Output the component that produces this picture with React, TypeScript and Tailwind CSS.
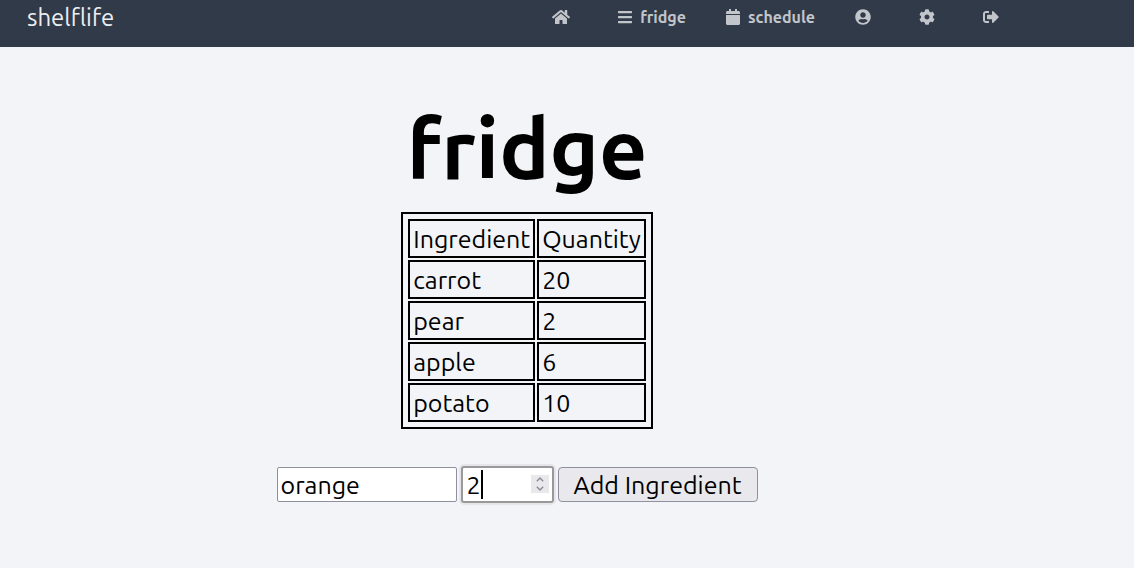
import { useState } from "react";
import type { ReactNode } from "react";
import {
  FaBars,
  FaCalendar,
  FaCog,
  FaHome,
  FaSignOutAlt,
  FaUserCircle,
} from "react-icons/fa";

type Row = { name: string; quantity: number };

const initialRows: Row[] = [
  { name: "carrot", quantity: 20 },
  { name: "pear", quantity: 2 },
  { name: "apple", quantity: 6 },
  { name: "potato", quantity: 10 },
];

function NavLink({
  href,
  label,
  icon,
  children,
}: {
  href: string;
  label: string;
  icon: ReactNode;
  children?: ReactNode;
}) {
  return (
    <a
      href={href}
      aria-label={label}
      className="flex items-center text-base leading-6 font-bold text-[#c2c5ca]"
    >
      <span className="mr-2">{icon}</span>
      {children}
    </a>
  );
}

export default function App() {
  const [rows, setRows] = useState(initialRows);
  const [name, setName] = useState("orange");
  const [quantity, setQuantity] = useState("2");

  const step = (by: number) => setQuantity(String(Number(quantity) + by));

  return (
    <div className="min-h-screen bg-[#f2f4f8] font-[Ubuntu,'Noto_Sans',sans-serif] text-black">
      <header className="flex items-start justify-between bg-[#313a48] pr-[127px] pb-3 pl-[27px]">
        <a href="#home" className="text-2xl leading-[35px] text-[#eceef1]">
          shelflife
        </a>
        <nav className="flex gap-10 pt-[5px]">
          <NavLink href="#home" label="home" icon={<FaHome className="h-4 w-[18px]" />} />
          <NavLink href="#fridge" label="fridge" icon={<FaBars className="h-4 w-[14px]" />}>
            fridge
          </NavLink>
          <NavLink href="#schedule" label="schedule" icon={<FaCalendar className="h-4 w-[14px]" />}>
            schedule
          </NavLink>
          <NavLink href="#account" label="account" icon={<FaUserCircle className="h-4 w-4" />} />
          <NavLink href="#settings" label="settings" icon={<FaCog className="h-4 w-4" />} />
          <NavLink href="#logout" label="log out" icon={<FaSignOutAlt className="h-4 w-4" />} />
        </nav>
      </header>

      <main className="flex flex-col items-center pt-[51px] pr-20 text-[25px]">
        <h1 className="text-[84px] leading-[100px] font-bold">fridge</h1>

        <table className="mt-[14px] border-separate border-spacing-[2px] border-2 border-black p-[3px]">
          <thead>
            <tr>
              <th className="h-[39px] border-2 border-black px-[3px] text-left leading-8 font-normal">
                Ingredient
              </th>
              <th className="h-[39px] border-2 border-black px-[3px] text-left leading-8 font-normal">
                Quantity
              </th>
            </tr>
          </thead>
          <tbody>
            {rows.map((row) => (
              <tr key={row.name}>
                <td className="h-[39px] border-2 border-black px-[3px] leading-8">{row.name}</td>
                <td className="h-[39px] border-2 border-black px-[3px] leading-8">
                  {row.quantity}
                </td>
              </tr>
            ))}
          </tbody>
        </table>

        <form
          className="mt-[37px] flex items-center gap-1 pr-5"
          onSubmit={(event) => {
            event.preventDefault();
            setRows([...rows, { name, quantity: Number(quantity) }]);
          }}
        >
          <input
            aria-label="Ingredient"
            value={name}
            onChange={(event) => setName(event.target.value)}
            className="h-[35px] w-[180px] rounded-xs border border-[#8f8f9d] bg-white px-[3px] pt-[2px]"
          />
          <div className="relative">
            <input
              type="number"
              aria-label="Quantity"
              value={quantity}
              onChange={(event) => setQuantity(event.target.value)}
              className="block h-[37px] w-[93px] [appearance:textfield] rounded-[3px] border-2 border-[#999999] bg-white px-1 pt-[2px] caret-transparent ring-2 ring-[#e6e6ea] outline-none"
            />
            <span className="absolute top-1 left-5 h-[29px] w-[2px] bg-black" />
            <div className="absolute top-[9px] right-[5px] flex h-[18px] w-[18px] flex-col bg-[#e9e9ed] text-[#8a8a90]">
              <button
                type="button"
                aria-label="Increase quantity"
                onClick={() => step(1)}
                className="flex h-[9px] items-center justify-center"
              >
                <svg width="8" height="5" viewBox="0 0 8 5" fill="none" stroke="currentColor" strokeWidth="1.4">
                  <path d="M0.8 4.2 4 1 7.2 4.2" />
                </svg>
              </button>
              <button
                type="button"
                aria-label="Decrease quantity"
                onClick={() => step(-1)}
                className="flex h-[9px] items-center justify-center"
              >
                <svg width="8" height="5" viewBox="0 0 8 5" fill="none" stroke="currentColor" strokeWidth="1.4">
                  <path d="M0.8 0.8 4 4 7.2 0.8" />
                </svg>
              </button>
            </div>
          </div>
          <button
            type="submit"
            className="h-[35px] w-[200px] rounded border border-[#8f8f9d] bg-[#e9e9ed] leading-8 whitespace-nowrap"
          >
            Add Ingredient
          </button>
        </form>
      </main>
    </div>
  );
}
